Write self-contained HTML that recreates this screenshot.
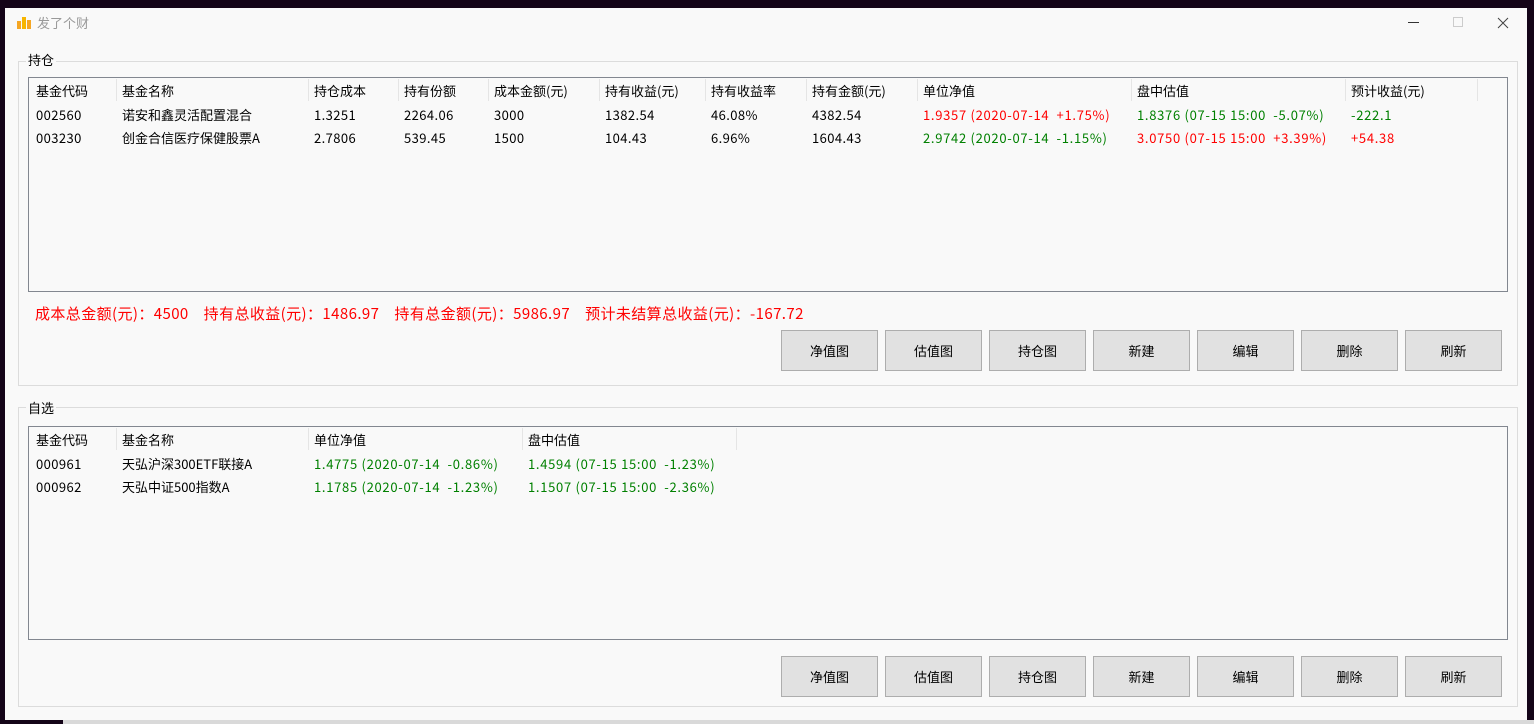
<!DOCTYPE html>
<html><head><meta charset="utf-8"><style>
*{margin:0;padding:0;box-sizing:border-box}
body{width:1534px;height:724px;background:#140418;position:relative;overflow:hidden;font-family:"Noto Sans CJK SC","Liberation Sans",sans-serif;font-size:13px;line-height:18px;color:#000}
.win{position:absolute;left:5px;top:8px;width:1522px;height:712px;background:#f9f9f9}
.a{position:absolute;white-space:nowrap}
.gb{position:absolute;border:1px solid #dcdcdc}
.gt{position:absolute;background:#f9f9f9;padding:0 2px;font-size:13px}
.tb{position:absolute;border:1px solid #828790;background:#f9f9f9}
.sep{position:absolute;top:2px;width:1px;height:22px;background:#e5e5e5}
.btn{position:absolute;width:97px;height:41px;background:#e1e1e1;border:1px solid #adadad;text-align:center;line-height:39px;font-size:13px}
.r{color:#ff0000;letter-spacing:.7px}.g{color:#008000;letter-spacing:.7px}
.n{letter-spacing:.4px}
</style></head><body>
<div class="win"></div>
<div class="a" style="left:63px;top:720px;width:1471px;height:4px;background:#d9d9d9"></div>
<svg class="a" style="left:16px;top:15px" width="17" height="15"><rect x="1" y="6" width="4" height="8" fill="#f5a623"/><rect x="6" y="2" width="4" height="12" fill="#f7b500"/><rect x="11" y="5" width="4" height="9" fill="#f5a623"/></svg>
<div class="a" style="left:37px;top:14px;color:#999">发了个财</div>
<div class="a" style="left:1408px;top:22px;width:11px;height:1px;background:#333"></div>
<div class="a" style="left:1453px;top:17px;width:10px;height:10px;border:1px solid #ccc"></div>
<svg class="a" style="left:1497px;top:17px" width="12" height="12"><path d="M1 1L11 11M11 1L1 11" stroke="#444" stroke-width="1"/></svg>

<div class="gb" style="left:18px;top:61px;width:1500px;height:325px"></div>
<div class="gt" style="left:26px;top:51px">持仓</div>
<div class="tb" style="left:28px;top:77px;width:1480px;height:215px"></div>
<div class="sep" style="left:116px;top:79px"></div><div class="sep" style="left:308px;top:79px"></div><div class="sep" style="left:398px;top:79px"></div><div class="sep" style="left:488px;top:79px"></div><div class="sep" style="left:599px;top:79px"></div><div class="sep" style="left:705px;top:79px"></div><div class="sep" style="left:806px;top:79px"></div><div class="sep" style="left:917px;top:79px"></div><div class="sep" style="left:1131px;top:79px"></div><div class="sep" style="left:1345px;top:79px"></div><div class="sep" style="left:1477px;top:79px"></div>
<div class="a" style="left:36px;top:82px">基金代码</div><div class="a" style="left:122px;top:82px">基金名称</div><div class="a" style="left:314px;top:82px">持仓成本</div><div class="a" style="left:404px;top:82px">持有份额</div><div class="a" style="left:494px;top:82px">成本金额(元)</div><div class="a" style="left:605px;top:82px">持有收益(元)</div><div class="a" style="left:711px;top:82px">持有收益率</div><div class="a" style="left:812px;top:82px">持有金额(元)</div><div class="a" style="left:923px;top:82px">单位净值</div><div class="a" style="left:1137px;top:82px">盘中估值</div><div class="a" style="left:1351px;top:82px">预计收益(元)</div>
<div class="a n" style="left:36px;top:106px">002560</div><div class="a" style="left:122px;top:106px">诺安和鑫灵活配置混合</div><div class="a n" style="left:314px;top:106px">1.3251</div><div class="a n" style="left:404px;top:106px">2264.06</div><div class="a n" style="left:494px;top:106px">3000</div><div class="a n" style="left:605px;top:106px">1382.54</div><div class="a n" style="left:711px;top:106px">46.08%</div><div class="a n" style="left:812px;top:106px">4382.54</div><div class="a r" style="left:923px;top:106px">1.9357 (2020-07-14&nbsp; +1.75%)</div><div class="a g" style="left:1137px;top:106px">1.8376 (07-15 15:00&nbsp; -5.07%)</div><div class="a g" style="left:1351px;top:106px">-222.1</div>
<div class="a n" style="left:36px;top:129px">003230</div><div class="a" style="left:122px;top:129px">创金合信医疗保健股票A</div><div class="a n" style="left:314px;top:129px">2.7806</div><div class="a n" style="left:404px;top:129px">539.45</div><div class="a n" style="left:494px;top:129px">1500</div><div class="a n" style="left:605px;top:129px">104.43</div><div class="a n" style="left:711px;top:129px">6.96%</div><div class="a n" style="left:812px;top:129px">1604.43</div><div class="a g" style="left:923px;top:129px">2.9742 (2020-07-14&nbsp; -1.15%)</div><div class="a r" style="left:1137px;top:129px">3.0750 (07-15 15:00&nbsp; +3.39%)</div><div class="a r" style="left:1351px;top:129px">+54.38</div>
<div class="a" style="left:35px;top:304px;font-size:15px;line-height:20px;color:#f00;letter-spacing:.4px">成本总金额(元)：4500&nbsp;&nbsp;&nbsp; 持有总收益(元)：1486.97&nbsp;&nbsp;&nbsp; 持有总金额(元)：5986.97&nbsp;&nbsp;&nbsp; 预计未结算总收益(元)：-167.72</div>
<div class="btn" style="left:781px;top:330px">净值图</div><div class="btn" style="left:885px;top:330px">估值图</div><div class="btn" style="left:989px;top:330px">持仓图</div><div class="btn" style="left:1093px;top:330px">新建</div><div class="btn" style="left:1197px;top:330px">编辑</div><div class="btn" style="left:1301px;top:330px">删除</div><div class="btn" style="left:1405px;top:330px">刷新</div>

<div class="gb" style="left:18px;top:407px;width:1500px;height:300px"></div>
<div class="gt" style="left:26px;top:399px">自选</div>
<div class="tb" style="left:28px;top:426px;width:1480px;height:214px"></div>
<div class="sep" style="left:116px;top:428px"></div><div class="sep" style="left:308px;top:428px"></div><div class="sep" style="left:522px;top:428px"></div><div class="sep" style="left:736px;top:428px"></div>
<div class="a" style="left:36px;top:431px">基金代码</div><div class="a" style="left:122px;top:431px">基金名称</div><div class="a" style="left:314px;top:431px">单位净值</div><div class="a" style="left:528px;top:431px">盘中估值</div>
<div class="a n" style="left:36px;top:455px">000961</div><div class="a" style="left:122px;top:455px">天弘沪深300ETF联接A</div><div class="a g" style="left:314px;top:455px">1.4775 (2020-07-14&nbsp; -0.86%)</div><div class="a g" style="left:528px;top:455px">1.4594 (07-15 15:00&nbsp; -1.23%)</div>
<div class="a n" style="left:36px;top:478px">000962</div><div class="a" style="left:122px;top:478px">天弘中证500指数A</div><div class="a g" style="left:314px;top:478px">1.1785 (2020-07-14&nbsp; -1.23%)</div><div class="a g" style="left:528px;top:478px">1.1507 (07-15 15:00&nbsp; -2.36%)</div>
<div class="btn" style="left:781px;top:656px">净值图</div><div class="btn" style="left:885px;top:656px">估值图</div><div class="btn" style="left:989px;top:656px">持仓图</div><div class="btn" style="left:1093px;top:656px">新建</div><div class="btn" style="left:1197px;top:656px">编辑</div><div class="btn" style="left:1301px;top:656px">删除</div><div class="btn" style="left:1405px;top:656px">刷新</div>
</body></html>
